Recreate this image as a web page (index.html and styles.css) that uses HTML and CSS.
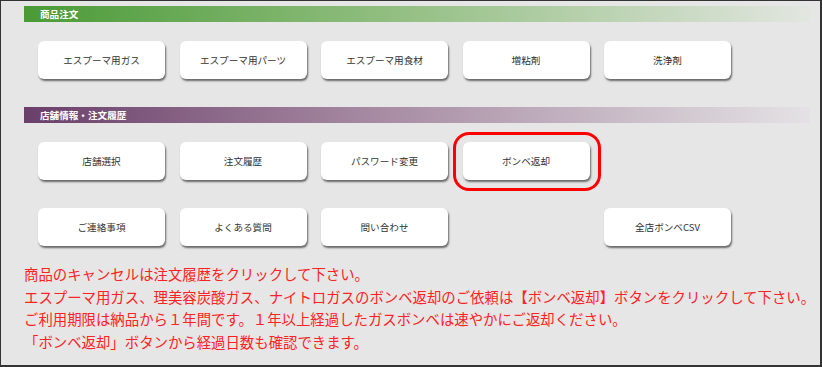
FILE: index.html
```html
<!DOCTYPE html>
<html lang="ja">
<head>
    <meta charset="UTF-8">
    <title>メニュー</title>
    <link rel="stylesheet" href="styles.css">
</head>
<body>
    <div class="menu-frame">
        <div class="section-bar bar-order">商品注文</div>
        <div class="btn-grid row-first">
            <a class="menu-btn">エスプーマ用ガス</a>
            <a class="menu-btn">エスプーマ用パーツ</a>
            <a class="menu-btn">エスプーマ用食材</a>
            <a class="menu-btn">増粘剤</a>
            <a class="menu-btn">洗浄剤</a>
        </div>

        <div class="section-bar bar-shop">店舗情報・注文履歴</div>
        <div class="btn-grid row-first">
            <a class="menu-btn">店舗選択</a>
            <a class="menu-btn">注文履歴</a>
            <a class="menu-btn">パスワード変更</a>
            <a class="menu-btn marked">ボンベ返却</a>
        </div>
        <div class="btn-grid row-next">
            <a class="menu-btn">ご連絡事項</a>
            <a class="menu-btn">よくある質問</a>
            <a class="menu-btn">問い合わせ</a>
            <span></span>
            <a class="menu-btn">全店ボンベCSV</a>
        </div>

        <div class="notice">
            <p>商品のキャンセルは注文履歴をクリックして下さい。</p>
            <p>エスプーマ用ガス、理美容炭酸ガス、ナイトロガスのボンベ返却のご依頼は【ボンベ返却】ボタンをクリックして下さい。</p>
            <p>ご利用期限は納品から１年間です。１年以上経過したガスボンベは速やかにご返却ください。</p>
            <p>「ボンベ返却」ボタンから経過日数も確認できます。</p>
        </div>
    </div>
</body>
</html>
```

FILE: styles.css
```css
body {
    margin: 0;
    font-family: "Noto Sans CJK JP", "Liberation Sans", sans-serif;
}
.menu-frame {
    box-sizing: border-box;
    width: 822px;
    height: 367px;
    padding: 5px 0 0 23px;
    background: #e6e6e6;
    border: 1px solid #333;
    border-right-width: 2px;
    border-bottom-width: 2px;
}
.section-bar {
    width: 786px;
    height: 16px;
    line-height: 16px;
    padding-left: 16px;
    box-sizing: border-box;
    color: #fff;
    font-size: 9.6px;
    font-weight: bold;
}
.bar-order {
    background: linear-gradient(to right, #4a9a36, #8fbd7e 45%, #e2e6e0);
}
.bar-shop {
    margin-top: 28px;
    background: linear-gradient(to right, #6a3f6a, #a78ba3 45%, #e4e2e4);
}
.btn-grid {
    display: grid;
    grid-template-columns: repeat(5, 127px);
    column-gap: 14.5px;
    padding-left: 14px;
}
.row-first {
    margin-top: 19px;
}
.row-next {
    margin-top: 28px;
}
.menu-btn {
    position: relative;
    height: 38px;
    line-height: 38px;
    background: #fff;
    border-radius: 6px;
    box-shadow: 1px 2px 2px rgba(0,0,0,0.55);
    text-align: center;
    font-size: 9.6px;
    color: #333;
    cursor: pointer;
}
.marked::after {
    content: "";
    position: absolute;
    left: -10px;
    top: -10px;
    right: -11px;
    bottom: -11px;
    border: 3px solid #f00;
    border-radius: 16px;
}
.notice {
    margin-top: 17px;
    color: #f22;
    font-size: 14.4px;
    line-height: 22.5px;
}
.notice p {
    margin: 0;
}
```
